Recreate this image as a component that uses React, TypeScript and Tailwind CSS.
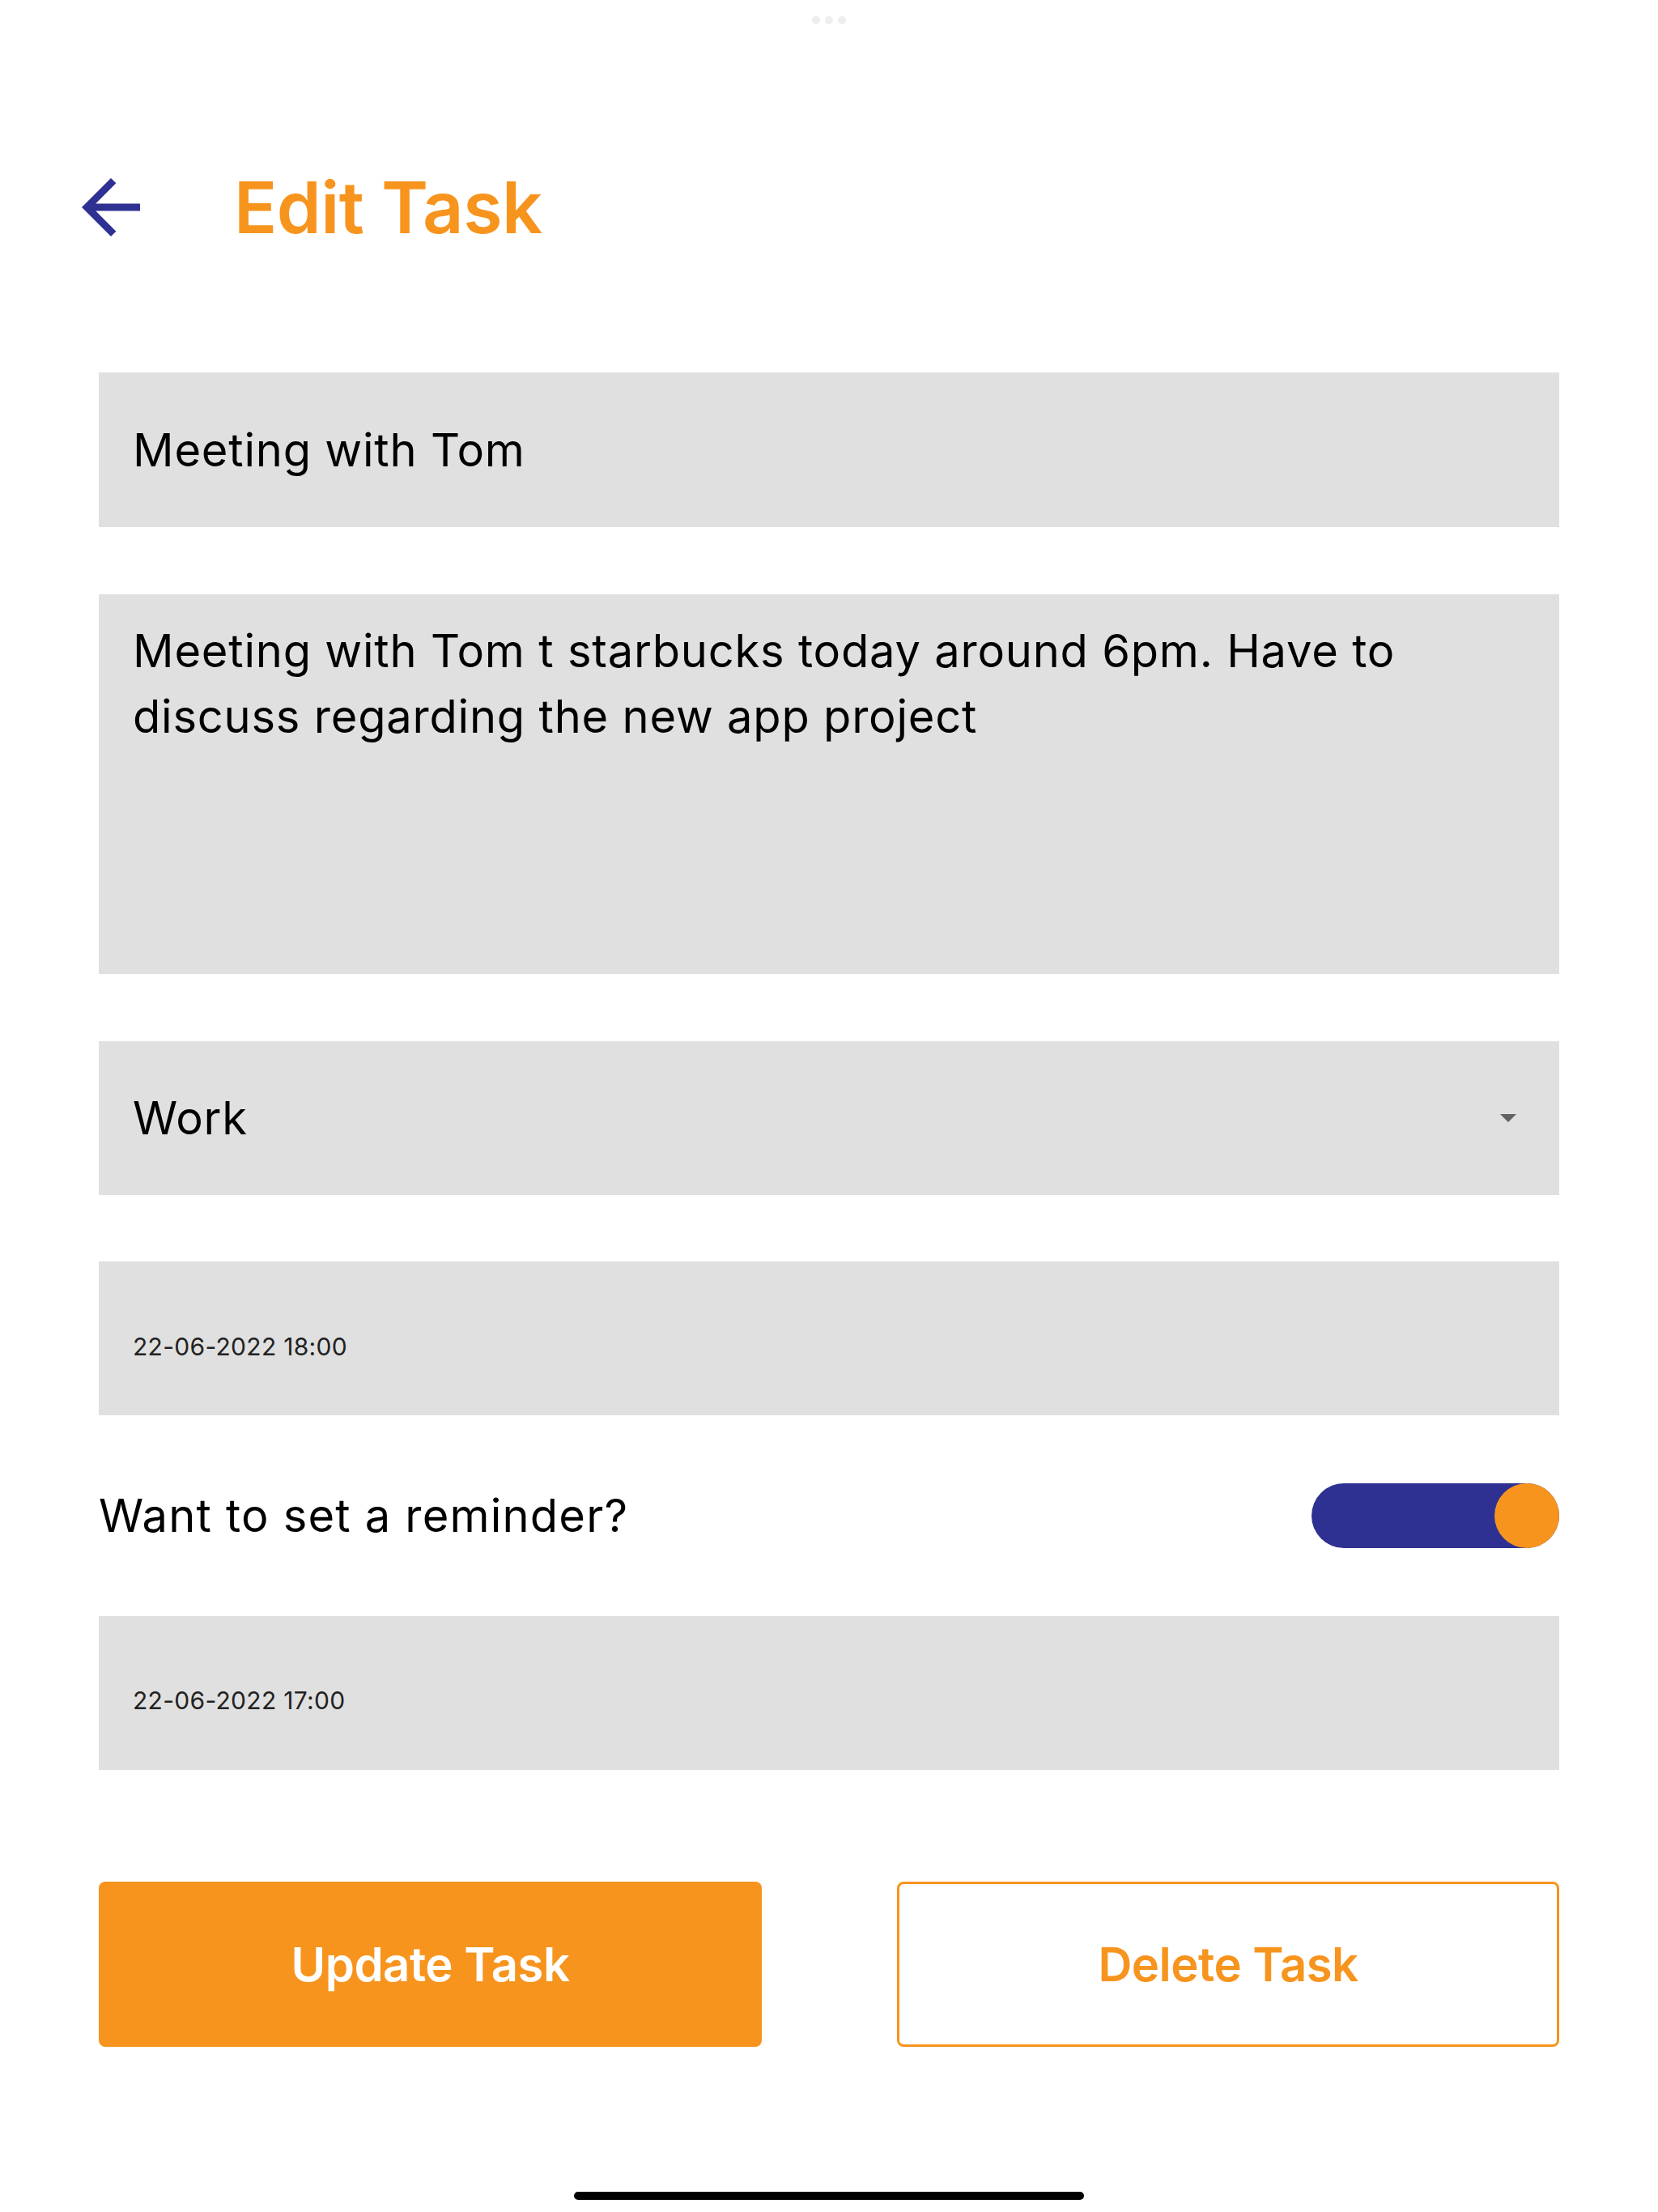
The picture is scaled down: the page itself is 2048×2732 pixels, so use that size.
import { useState } from 'react';

const ORANGE = '#F7941E';

function BackArrow() {
  // material style arrow_back
  return (
    <svg width="76" height="72" viewBox="4 4 16 16" fill="#2E3192">
      <path d="M20 11H7.83l5.59-5.59L12 4l-8 8 8 8 1.41-1.41L7.83 13H20v-2z" />
    </svg>
  );
}

function Field({ children, className = '' }: { children: React.ReactNode; className?: string }) {
  return <div className={`w-full bg-[#E0E0E0] px-[42px] ${className}`}>{children}</div>;
}

export default function App() {
  const [remind, setRemind] = useState(true);

  return (
    <div className="relative w-[2048px] h-[2732px] bg-white text-black [font-family:Inter,'Noto_Sans',sans-serif] overflow-hidden">
      {/* top handle dots */}
      <div className="flex justify-center gap-[6px] pt-[20px]">
        <span className="w-[10px] h-[10px] rounded-full bg-[#EEEEEE]" />
        <span className="w-[10px] h-[10px] rounded-full bg-[#EEEEEE]" />
        <span className="w-[10px] h-[10px] rounded-full bg-[#EEEEEE]" />
      </div>

      {/* header */}
      <div className="flex items-center h-[100px] mt-[176px] pl-[99px]">
        <button className="flex items-center">
          <BackArrow />
        </button>
        <h1 className="ml-[114px] text-[88px] leading-none font-semibold tracking-[-0.5px] text-[#F7941E]">Edit Task</h1>
      </div>

      <div className="flex flex-col px-[122px] mt-[154px] text-[56px] tracking-[0.8px]">
        <Field className="h-[191px] flex items-center">
          <span className="leading-none">Meeting with Tom</span>
        </Field>

        <Field className="h-[469px] mt-[83px] pt-[30px]">
          <p className="leading-[81px]">
            Meeting with Tom t starbucks today around 6pm. Have to discuss regarding the new app project
          </p>
        </Field>

        <Field className="h-[190px] mt-[83px] flex items-center justify-between pr-[53px]">
          <span className="leading-none">Work</span>
          <svg width="20" height="10" viewBox="0 0 20 10">
            <path d="M0 0h20L10 10z" fill="#616161" />
          </svg>
        </Field>

        <Field className="h-[190px] mt-[82px] flex items-center pt-[20px]">
          <span className="text-[30px] leading-none tracking-[0.3px] text-[#222]">22-06-2022 18:00</span>
        </Field>

        <div className="flex items-center justify-between h-[80px] mt-[84px]">
          <span className="leading-none tracking-[1.2px]">Want to set a reminder?</span>
          <button
            onClick={() => setRemind(!remind)}
            className="relative w-[306px] h-[80px] rounded-full bg-[#2E3192] flex items-center justify-end"
          >
            <span className="w-[80px] h-[80px] rounded-full bg-[#F7941E]" />
          </button>
        </div>

        <Field className="h-[190px] mt-[84px] flex items-center pt-[18px]">
          <span className="text-[30px] leading-none tracking-[0.3px] text-[#222]">22-06-2022 17:00</span>
        </Field>

        <div className="flex justify-between mt-[138px]">
          <button className="w-[819px] h-[204px] rounded-[8px] bg-[#F7941E] text-white text-[58px] font-semibold tracking-[-0.5px]">
            Update Task
          </button>
          <button
            className="w-[818px] h-[204px] rounded-[8px] border-[3px] bg-white text-[58px] font-semibold tracking-[-0.5px]"
            style={{ borderColor: ORANGE, color: ORANGE }}
          >
            Delete Task
          </button>
        </div>
      </div>

      {/* home indicator */}
      <div className="absolute left-[709px] bottom-[15px] w-[630px] h-[10px] rounded-full bg-black" />
    </div>
  );
}
